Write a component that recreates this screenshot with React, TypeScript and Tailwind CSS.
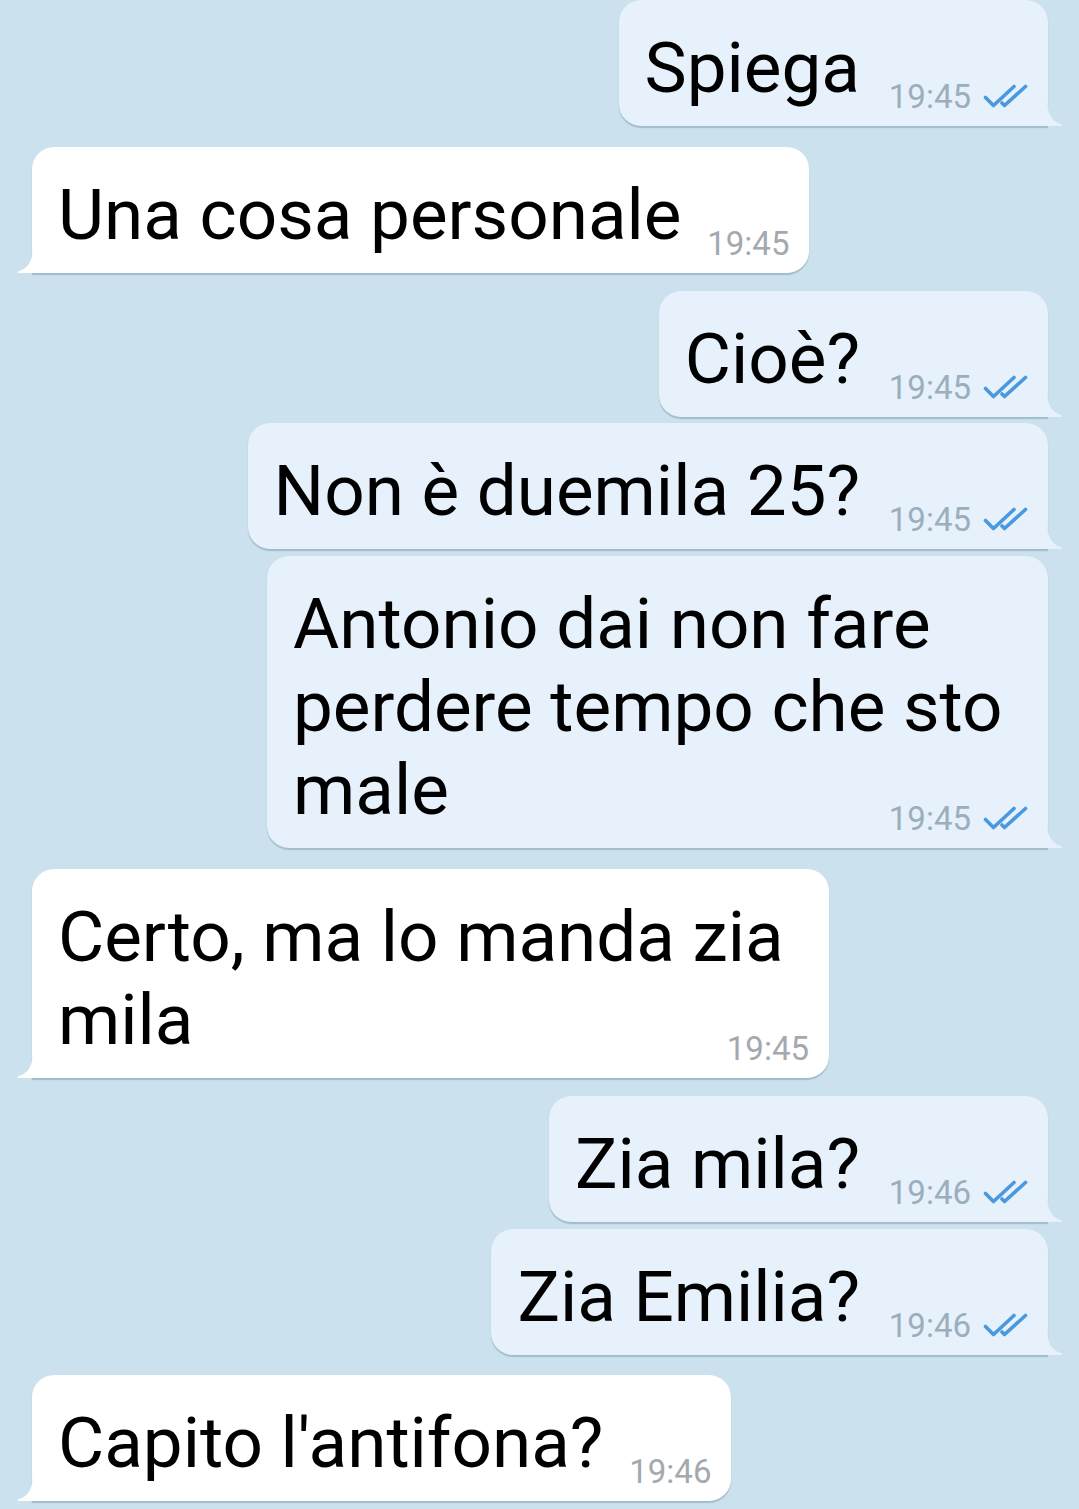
import React from 'react';

type Msg = {
  id: number;
  out: boolean;
  text: string;
  time: string;
  gap: string;
  width?: string;
};

const MESSAGES: Msg[] = [
  { id: 1, out: true, text: 'Spiega', time: '19:45', gap: 'mt-0' },
  { id: 2, out: false, text: 'Una cosa personale', time: '19:45', gap: 'mt-[21px]' },
  { id: 3, out: true, text: 'Cioè?', time: '19:45', gap: 'mt-[18px]' },
  { id: 4, out: true, text: 'Non è duemila 25?', time: '19:45', gap: 'mt-[6px]' },
  { id: 5, out: true, text: 'Antonio dai non fare perdere tempo che sto male', time: '19:45', gap: 'mt-[7px]', width: 'w-[781px]' },
  { id: 6, out: false, text: 'Certo, ma lo manda zia mila', time: '19:45', gap: 'mt-[21px]', width: 'w-[797px]' },
  { id: 7, out: true, text: 'Zia mila?', time: '19:46', gap: 'mt-[18px]' },
  { id: 8, out: true, text: 'Zia Emilia?', time: '19:46', gap: 'mt-[7px]' },
  { id: 9, out: false, text: "Capito l'antifona?", time: '19:46', gap: 'mt-[20px]' },
];

const Checks: React.FC = () => (
  <svg width="45" height="24" viewBox="0 0 45 24" className="ml-[12px]" fill="none" stroke="#4a98de" strokeWidth="3.6" strokeLinecap="round" strokeLinejoin="round">
    <path d="M2.5 13.5 L10.5 21.5 L31 2.5" />
    <path d="M19 19 L21.5 21.5 L42.5 2.5" />
  </svg>
);

const Tail: React.FC<{ out: boolean }> = ({ out }) => (
  <svg
    width="16"
    height="28"
    viewBox="0 0 16 28"
    className={out ? 'absolute bottom-0 -right-[15px]' : 'absolute bottom-0 -left-[15px] -scale-x-100'}
  >
    <path d="M0 0 C0 15 4 23 14 26 C16 26.6 16 28 14 28 L0 28 Z" fill="#9fb6c6" transform="translate(0 1)" opacity="0.6" />
    <path d="M0 0 C0 15 4 23 14 26 C16 26.6 16 28 14 28 L0 28 Z" fill={out ? '#e6f1fb' : '#ffffff'} />
  </svg>
);

const Bubble: React.FC<{ msg: Msg }> = ({ msg }) => {
  const { out } = msg;
  return (
    <div className={`flex ${out ? 'justify-end' : 'justify-start'} ${msg.gap}`}>
      <div
        className={`relative ${msg.width ?? ''} ${out ? 'bg-[#e6f1fb] rounded-[22px] rounded-br-none pl-[26px]' : 'bg-white rounded-[22px] rounded-bl-none pl-[26px]'} pr-[20px] pt-[26px] pb-[17px] shadow-[0_1.5px_1px_rgba(90,120,140,0.35)]`}
      >
        <p className="text-[71px] leading-[83px] text-black">
          {msg.text}
          <span className={`inline-block h-px ${out ? 'w-[168px]' : 'w-[108px]'}`} />
        </p>
        <div className="absolute bottom-[13px] right-[20px] flex items-baseline">
          <span className={`text-[33px] leading-[32px] ${out ? 'text-[#9aaebd]' : 'text-[#a3a9ae]'}`}>{msg.time}</span>
          {out && <Checks />}
        </div>
        <Tail out={out} />
      </div>
    </div>
  );
};

const App: React.FC = () => {
  return (
    <div className="min-h-screen w-full bg-[#cbe1ed] pl-[32px] pr-[31px] pb-[10px]" style={{ fontFamily: 'Roboto, "Noto Sans", sans-serif' }}>
      {MESSAGES.map(m => (
        <Bubble key={m.id} msg={m} />
      ))}
    </div>
  );
};

export default App;
